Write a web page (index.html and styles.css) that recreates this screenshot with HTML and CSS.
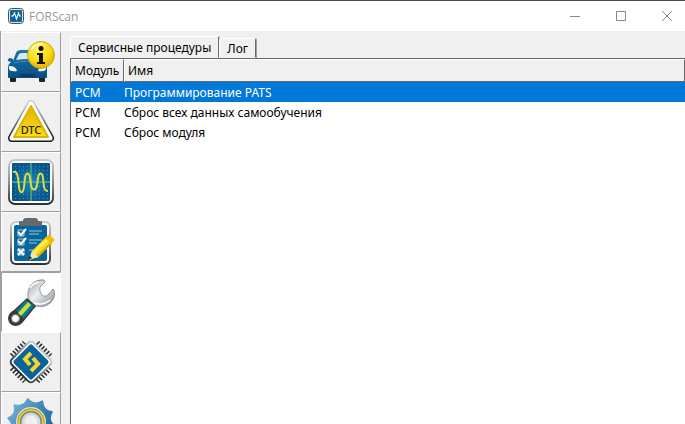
FILE: index.html
```
<!DOCTYPE html>
<html lang="ru">
<head>
  <meta charset="UTF-8">
  <meta name="viewport" content="width=device-width, initial-scale=1">
  <title>FORScan</title>
  <link rel="stylesheet" href="styles.css">
</head>
<body>

  <header class="titlebar">
    <svg class="app-icon" viewBox="0 0 16 16" aria-hidden="true">
      <rect x=".5" y=".5" width="15" height="15" rx="3" fill="#dce6ec" stroke="#46545e"/>
      <rect x="2" y="2" width="12" height="12" rx="1" fill="#12659a"/>
      <path d="M3 8h2l1.5-3 2 6 2-6 1 3H13" fill="none" stroke="#fff" stroke-width="1.1"/>
    </svg>
    <span class="app-name">FORScan</span>
    <div class="window-buttons">
      <button type="button" aria-label="Свернуть"><svg viewBox="0 0 10 10"><path d="M0 5.5h10"/></svg></button>
      <button type="button" aria-label="Развернуть"><svg viewBox="0 0 10 10"><path d="M.5 .5h9v9h-9z"/></svg></button>
      <button type="button" aria-label="Закрыть"><svg viewBox="0 0 10 10"><path d="M0 0l10 10M10 0L0 10"/></svg></button>
    </div>
  </header>

  <div class="workspace">
    <nav class="toolbar">

      <!-- Автомобиль -->
      <button type="button" class="tool" aria-label="Автомобиль">
        <svg viewBox="0 0 48 48">
          <defs>
            <linearGradient id="carBlue" x1="0" y1="0" x2="0" y2="1">
              <stop offset="0" stop-color="#1a77b0"/><stop offset="1" stop-color="#064d82"/>
            </linearGradient>
            <radialGradient id="infoYellow" cx=".4" cy=".3" r=".75">
              <stop offset="0" stop-color="#fff56a"/><stop offset=".6" stop-color="#f7d813"/><stop offset="1" stop-color="#d9a900"/>
            </radialGradient>
          </defs>
          <path d="M3 35h6v8q0 1-1 1H4q-1 0-1-1zM32 35h6v8q0 1-1 1h-4q-1 0-1-1z" fill="#222"/>
          <path d="M6 23l3-8q1-3 5-3h14q4 0 5 3l4 8q3 3 3 7v9q0 1-1 1H2q-1 0-1-1v-9q0-4 3-6l-3-1q-1-2 2-3l3 1z" fill="url(#carBlue)"/>
          <path d="M9 22l3-6q1-1 3-1h13q2 0 3 1l3 6q-12-2-25 0z" fill="#d6e7f1"/>
          <path d="M7 25q14-4 29 1" fill="none" stroke="#338bbf"/>
          <path d="M2 28q7 0 8 5-7 1-8-2zM39 28q-7 0-8 5 7 1 8-2z" fill="#f3f7f9"/>
          <path d="M12 36h17l-2 3H14z" fill="#123a59"/>
          <circle cx="34" cy="17" r="13.5" fill="url(#infoYellow)" stroke="#c69e13" stroke-width=".8"/>
          <path d="M24 12q4-7 12-6" fill="none" stroke="#fffbb0" stroke-width="2"/>
          <circle cx="34" cy="10.5" r="2.5" fill="#151500"/>
          <path d="M30 15h6v9h2v2h-8v-2h2v-7h-2z" fill="#151500"/>
        </svg>
      </button>

      <!-- Коды неисправностей -->
      <button type="button" class="tool" aria-label="Коды неисправностей">
        <svg viewBox="0 0 48 48">
          <defs>
            <linearGradient id="signEdge" x1="0" y1="0" x2="0" y2="1">
              <stop offset="0" stop-color="#c9cccd"/><stop offset=".5" stop-color="#777"/><stop offset="1" stop-color="#1d1d1d"/>
            </linearGradient>
            <linearGradient id="signFill" x1="0" y1="0" x2="0" y2="1">
              <stop offset="0" stop-color="#e0b400"/><stop offset="1" stop-color="#ffdc1a"/>
            </linearGradient>
          </defs>
          <path d="M24 6L43 40H5z" fill="url(#signEdge)" stroke="url(#signEdge)" stroke-width="8" stroke-linejoin="round"/>
          <path d="M24 6L43 40H5z" fill="#fff" stroke="#fff" stroke-width="5" stroke-linejoin="round"/>
          <path d="M24 8L41 39H7z" fill="url(#signFill)" stroke="#dfb300" stroke-width="2" stroke-linejoin="round"/>
          <text x="24" y="36" class="dtc-text" text-anchor="middle">DTC</text>
        </svg>
      </button>

      <!-- Осциллограф -->
      <button type="button" class="tool" aria-label="Осциллограф">
        <svg viewBox="0 0 48 48">
          <defs>
            <linearGradient id="frame" x1="0" y1="0" x2="0" y2="1">
              <stop offset="0" stop-color="#c8cdd0"/><stop offset=".5" stop-color="#8b9195"/><stop offset="1" stop-color="#282d31"/>
            </linearGradient>
            <radialGradient id="screen">
              <stop offset="0" stop-color="#1c82b5"/><stop offset="1" stop-color="#08578d"/>
            </radialGradient>
            <pattern id="dots" width="4" height="4" patternUnits="userSpaceOnUse">
              <path d="M0 0h1v1H0z" fill="#3d93bd"/>
            </pattern>
          </defs>
          <rect x="1" y="1" width="46" height="46" rx="7" fill="url(#frame)"/>
          <rect x="3" y="3" width="42" height="42" rx="5" fill="#fff"/>
          <rect x="5" y="5" width="38" height="38" rx="1" fill="url(#screen)"/>
          <rect x="5" y="5" width="38" height="38" fill="url(#dots)"/>
          <path d="M24 5v38M5 24h38" stroke="#55a878" stroke-width="1.5"/>
          <path d="M6 14c4-1 4 2 5 6l1 9c1 7 4 7 5 0l1-9c1-6 4-6 5 0l1 7c1 6 5 6 6 0l1-7c1-6 4-6 5 0l1 9q1 4 4 4" fill="none" stroke="#d9dc45" stroke-width="2"/>
        </svg>
      </button>

      <!-- Тесты -->
      <button type="button" class="tool" aria-label="Тесты">
        <svg viewBox="0 0 48 48">
          <rect x="3" y="3" width="41" height="44" rx="6" fill="url(#frame)"/>
          <rect x="5" y="5" width="37" height="40" rx="4" fill="#fff"/>
          <rect x="7" y="7" width="33" height="36" rx="2" fill="#09659c"/>
          <path d="M12 8V4q0-1 2-1h2q0-3 3-3h9q3 0 3 3h2q2 0 2 1v4z" fill="#636b71"/>
          <path d="M11 12h6v6h-6zM11 21h6v6h-6zM11 31h6v6h-6z" fill="#176fa2" stroke="#a8cadd"/>
          <path d="M11 14l3 3 5-6M11 23l3 3 5-6M11 31l6 6M17 31l-6 6" fill="none" stroke="#fff" stroke-width="2"/>
          <path d="M22 13h13M22 16h10M22 22h13M22 25h8M22 32h5" stroke="#9acbe1"/>
          <path d="M25 33L39 19l6 6-14 14-8 2z" fill="#ffd91b"/>
          <path d="M27 35l14-14" stroke="#fff36a" stroke-width="2"/>
          <path d="M30 39l14-14" stroke="#dda900" stroke-width="2"/>
          <path d="M25 33l6 6-9 3z" fill="#f4e6b5"/>
          <path d="M23 38l2 2-4 2z" fill="#222"/>
          <path d="M38 20l3-3q1-1 2 0l4 4q1 1 0 2l-3 3z" fill="#f1bd0b"/>
        </svg>
      </button>

      <!-- Сервисные процедуры -->
      <button type="button" class="tool active" aria-label="Сервисные процедуры" aria-pressed="true">
        <svg viewBox="0 0 48 48">
          <defs>
            <linearGradient id="steel" x1="0" y1="0" x2="1" y2="1">
              <stop offset="0" stop-color="#8e989b"/><stop offset=".45" stop-color="#eceff0"/><stop offset="1" stop-color="#7d8689"/>
            </linearGradient>
          </defs>
          <path d="M22 22Q19 14 24 7q6-6 13-5l1 2-5 5q-1 6 3 9 4 1 6-2l4-5 1 1q2 8-4 13-6 5-13 3l-4 2-7-5z" fill="url(#steel)" stroke="#777f82" stroke-width=".8"/>
          <path d="M23 10q3-5 9-6M27 25q9 3 16-3" fill="none" stroke="#fff" stroke-width="1.5"/>
          <path d="M20 20l9 8-13 16q-3 4-8 4-6-1-7-7 0-6 6-9z" fill="#363b3e"/>
          <path d="M19 22l8 6-11 13q-1-6-7-8z" fill="#087b9e"/>
          <path d="M21 24l3 3-10 11-3-3z" fill="#c9e332"/>
          <circle cx="8.5" cy="40.5" r="4" fill="#fff" stroke="#777" stroke-width="1"/>
        </svg>
      </button>

      <!-- Конфигурация -->
      <button type="button" class="tool" aria-label="Конфигурация">
        <svg viewBox="0 0 48 48">
          <path d="M5 18L18 5M30 5l13 13M5 30l13 13M30 43l13-13" stroke="#292e31" stroke-width="6" stroke-dasharray="1.6 1.8"/>
          <rect x="7.500" y="7.500" width="33" height="33" rx="5" transform="rotate(45 24 24)" fill="url(#frame)"/>
          <rect x="9.500" y="9.500" width="29" height="29" rx="3" transform="rotate(45 24 24)" fill="#fff"/>
          <rect x="11" y="11" width="26" height="26" rx="2" transform="rotate(45 24 24)" fill="#0a639a"/>
          <path d="M24 15l-6 6 5 6M26 20l5 6-7 7" fill="none" stroke="#f3d62b" stroke-width="4"/>
        </svg>
      </button>

      <!-- Настройки -->
      <button type="button" class="tool" aria-label="Настройки">
        <svg viewBox="0 0 48 48">
          <defs>
            <linearGradient id="gearBlue" x1="0" y1="0" x2="1" y2="1">
              <stop offset="0" stop-color="#82b9df"/><stop offset=".5" stop-color="#3d85b8"/><stop offset="1" stop-color="#0c588d"/>
            </linearGradient>
          </defs>
          <path d="M24 1Q29 9 38 5 37 15 46 17 40 24 46 31 37 33 38 43 29 39 24 47 19 39 10 43 11 33 2 31 8 24 2 17 11 15 10 5 19 9 24 1z" transform="rotate(-8 24 24)" fill="url(#gearBlue)" stroke="url(#gearBlue)" stroke-width="2" stroke-linejoin="round"/>
          <circle cx="24" cy="24" r="15" fill="#f7e58a"/>
          <circle cx="24" cy="24" r="13.5" fill="#2d719f"/>
          <circle cx="24" cy="24" r="13" fill="#e4c93b"/>
          <circle cx="24" cy="24" r="11" fill="#7b858b"/>
          <circle cx="24" cy="24" r="8" fill="#f0f0f0" stroke="#d5dadc" stroke-width="3"/>
        </svg>
      </button>
    </nav>

    <main class="content">
      <div class="tabs" role="tablist">
        <button type="button" class="tab selected" role="tab" aria-selected="true">Сервисные процедуры</button>
        <button type="button" class="tab" role="tab" aria-selected="false">Лог</button>
      </div>
      <div class="panel">
        <table class="procedures">
          <thead>
            <tr><th class="col-module">Модуль</th><th>Имя</th></tr>
          </thead>
          <tbody>
            <tr class="selected"><td>PCM</td><td>Программирование PATS</td></tr>
            <tr><td>PCM</td><td>Сброс всех данных самообучения</td></tr>
            <tr><td>PCM</td><td>Сброс модуля</td></tr>
          </tbody>
        </table>
      </div>
    </main>
  </div>

</body>
</html>
```
FILE: styles.css
```
:root {
  --face: #f0f0f0;
  --shadow: #a0a0a0;
  --dark: #696969;
  --highlight: #0078d7;
  --font-main: "Noto Sans", "DejaVu Sans Condensed", sans-serif;
}

* {
  box-sizing: border-box;
}

body {
  margin: 0;
  height: 100vh;
  display: flex;
  flex-direction: column;
  overflow: hidden;
  background: var(--face);
  color: #000;
  font-family: var(--font-main);
  font-size: 12px;
}

button {
  margin: 0;
  padding: 0;
  border: 0;
  background: none;
  color: inherit;
  font: inherit;
}

/* Заголовок окна */
.titlebar {
  flex: none;
  display: flex;
  align-items: center;
  height: 31px;
  padding-left: 8px;
  background: #fff;
  border-top: 1px solid #51484a;
}

.app-icon {
  width: 16px;
  height: 16px;
  margin-right: 5px;
}

.app-name {
  color: #999;
  font-family: "Open Sans", "Noto Sans", sans-serif;
}

.window-buttons {
  display: flex;
  gap: 16px;
  height: 100%;
  margin-left: auto;
  padding-right: 3px;
}

.window-buttons button {
  display: flex;
  align-items: center;
  justify-content: center;
  width: 30px;
}

.window-buttons svg {
  width: 10px;
  height: 10px;
  fill: none;
  stroke: #888;
}

.workspace {
  flex: 1;
  display: flex;
  min-height: 0;
}

/* Панель инструментов */
.toolbar {
  flex: none;
  width: 62px;
  padding-top: 1px;
  overflow: hidden;
  border-left: 1px solid var(--shadow);
}

.tool {
  display: flex;
  align-items: center;
  justify-content: center;
  width: 60px;
  height: 60px;
  border: 1px solid;
  border-color: #fff var(--shadow) var(--shadow) #fff;
}

.tool.active {
  background: #fff;
  border-color: var(--shadow) #fff #fff var(--shadow);
}

.tool svg {
  width: 48px;
  height: 48px;
}

.dtc-text {
  font-family: "Noto Sans", sans-serif;
  font-size: 11px;
  font-weight: 500;
  fill: #242000;
}

/* Вкладки и список */
.content {
  flex: 1;
  display: flex;
  flex-direction: column;
  min-width: 0;
  padding: 5px 0 0 8px;
}

.tabs {
  display: flex;
  align-items: flex-end;
}

.tab {
  height: 20px;
  padding: 0 7px;
  border: 1px solid;
  border-color: #fff var(--dark) transparent #fff;
  border-radius: 2px 2px 0 0;
  box-shadow: 1px 0 0 var(--shadow);
}

.tab.selected {
  height: 22px;
}

.panel {
  flex: 1;
  background: #fff;
  border-top: 1px solid var(--dark);
  border-left: 1px solid var(--dark);
}

.procedures {
  width: 100%;
  border-collapse: separate;
  border-spacing: 0;
}

.procedures th {
  height: 23px;
  padding: 0 3px;
  background: var(--face);
  border: 1px solid;
  border-color: #fff var(--dark) var(--dark) #fff;
  font-weight: normal;
  text-align: left;
}

.procedures .col-module {
  width: 53px;
}

.procedures td {
  height: 20px;
  padding: 0 4px;
}

.procedures td + td {
  padding-left: 0;
}

.procedures tr.selected {
  background: var(--highlight);
  color: #fff;
}
```
